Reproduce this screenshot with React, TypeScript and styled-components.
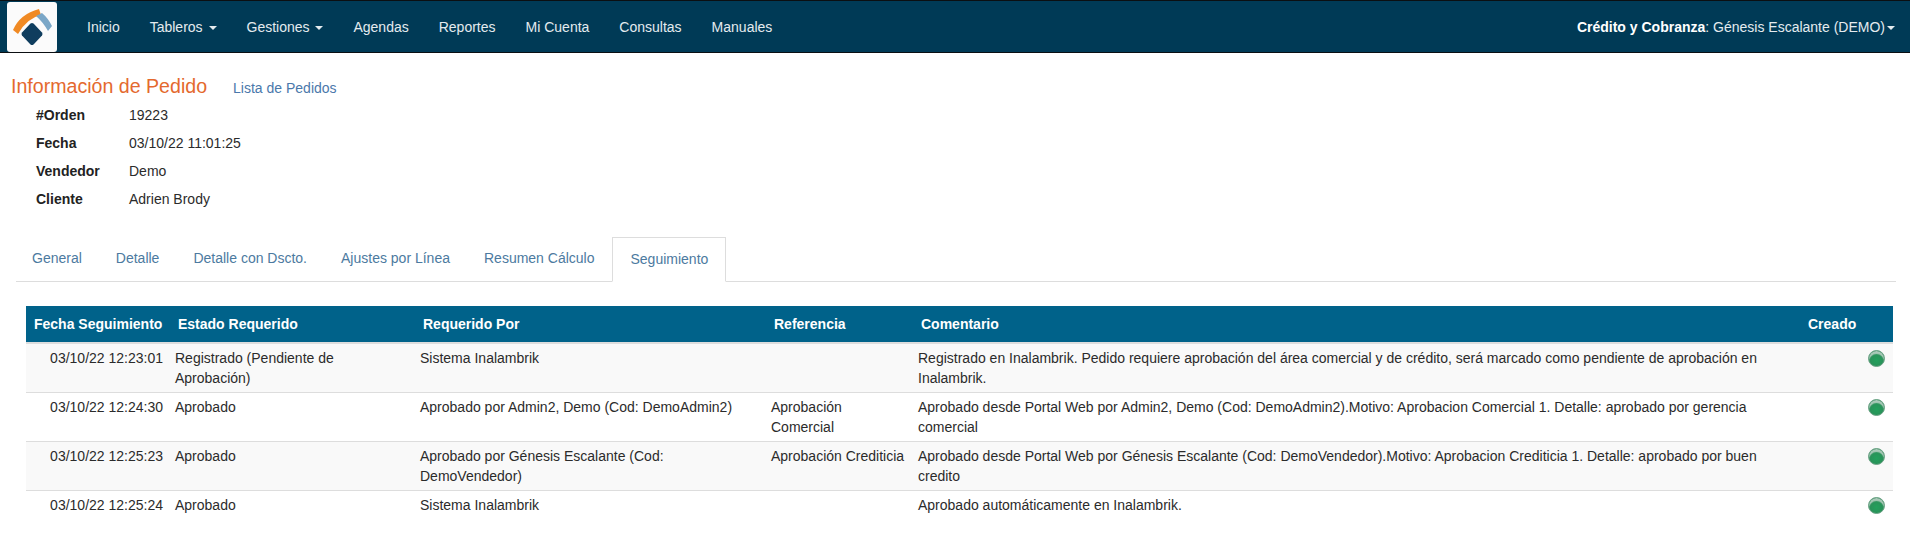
import styled, { createGlobalStyle } from "styled-components";

const GlobalStyle = createGlobalStyle`
  html, body {
    margin: 0;
    padding: 0;
    background: #fff;
  }
  body {
    font-family: "Liberation Sans", Arial, sans-serif;
    font-size: 14px;
    line-height: 20px;
    color: #333;
  }
`;

const Navbar = styled.nav`
  display: flex;
  align-items: center;
  justify-content: space-between;
  height: 51px;
  background-color: #003a56;
  border-top: 1px solid #0b0f12;
  border-bottom: 1px solid #0b0f12;
`;

const NavLeft = styled.div`
  display: flex;
  align-items: center;
  padding-left: 7px;
`;

const LogoBox = styled.div`
  display: flex;
  width: 50px;
  height: 50px;
  margin-right: 15px;
  background: #fbfbfb;
  border-radius: 3px;
`;

const NavItem = styled.a`
  padding: 0 15px;
  color: #e4ebef;
  white-space: nowrap;
`;

const Caret = styled.span`
  display: inline-block;
  width: 0;
  height: 0;
  margin-left: 2px;
  vertical-align: middle;
  border-top: 4px solid currentColor;
  border-right: 4px solid transparent;
  border-left: 4px solid transparent;
`;

const NavRight = styled.div`
  padding-right: 15px;
  color: #e4ebef;
  white-space: nowrap;

  strong {
    color: #fff;
  }
`;

const Header = styled.div`
  display: flex;
  align-items: baseline;
  margin: 23px 0 0 11px;
  height: 25px;
`;

const Title = styled.h1`
  margin: 0;
  font-size: 19.6px;
  line-height: 20px;
  font-weight: 400;
  color: #e4692e;
`;

const ListLink = styled.a`
  margin-left: 26px;
  color: #4a78ab;
`;

const InfoList = styled.dl`
  display: grid;
  grid-template-columns: 93px auto;
  grid-auto-rows: 28px;
  align-items: center;
  justify-content: start;
  margin: 0 0 0 36px;

  dt {
    font-weight: 700;
    color: #222;
  }

  dd {
    margin: 0;
    color: #2b2b2b;
  }
`;

const Tabs = styled.ul`
  display: flex;
  align-items: flex-end;
  gap: 2px;
  height: 44px;
  margin: 24px 14px 0 16px;
  padding: 0;
  list-style: none;
  border-bottom: 1px solid #ddd;
`;

const Tab = styled.li<{ $active?: boolean }>`
  box-sizing: border-box;
  height: ${(p) => (p.$active ? "45px" : "44px")};
  margin-bottom: ${(p) => (p.$active ? "-1px" : "0")};
  padding: ${(p) => (p.$active ? "11px 17px 0" : "11px 16px 0")};
  color: #4c7aa0;
  background: #fff;
  border: ${(p) => (p.$active ? "1px solid #ddd" : "0")};
  border-bottom-color: #fff;
`;

const TableWrap = styled.div`
  margin: 24px 17px 0 26px;
`;

const Table = styled.table`
  width: 100%;
  table-layout: fixed;
  border-collapse: collapse;
`;

const HeadCell = styled.th<{ $first?: boolean }>`
  height: 36px;
  box-sizing: border-box;
  padding: 8px 0 8px ${(p) => (p.$first ? "8px" : "11px")};
  text-align: left;
  font-weight: 700;
  color: #fff;
  background-color: #00628a;
  border-bottom: 2px solid #ddd;
  white-space: nowrap;
`;

const Row = styled.tr<{ $striped: boolean }>`
  background-color: ${(p) => (p.$striped ? "#f9f9f9" : "#fff")};
  border-bottom: 1px solid #ddd;

  &:last-child {
    border-bottom: 0;
  }
`;

const Cell = styled.td<{ $align?: string }>`
  height: 48px;
  box-sizing: border-box;
  padding: 4px 4px 4px 8px;
  vertical-align: top;
  text-align: ${(p) => p.$align || "left"};
  color: #2b2b2b;
`;

const StatusDot = styled.span`
  display: inline-block;
  width: 17px;
  height: 17px;
  margin: 2px 4px 0 0;
  vertical-align: top;
  border-radius: 50%;
  border: 1px solid #6fa488;
  box-sizing: border-box;
  background: radial-gradient(circle at 50% 62%, #23a05c 0%, #2a9159 55%, #2f7a52 100%);
  box-shadow: inset 0 3px 1px #a9c9b8;
`;

const tabs = ["General", "Detalle", "Detalle con Dscto.", "Ajustes por Línea", "Resumen Cálculo", "Seguimiento"];

const columns = [
  { label: "Fecha Seguimiento", width: 141 },
  { label: "Estado Requerido", width: 245 },
  { label: "Requerido Por", width: 351 },
  { label: "Referencia", width: 147 },
  { label: "Comentario", width: 887 },
  { label: "Creado", width: 96 },
];

const rows = [
  {
    date: "03/10/22 12:23:01",
    state: "Registrado (Pendiente de Aprobación)",
    by: "Sistema Inalambrik",
    ref: "",
    comment:
      "Registrado en Inalambrik. Pedido requiere aprobación del área comercial y de crédito, será marcado como pendiente de aprobación en Inalambrik.",
  },
  {
    date: "03/10/22 12:24:30",
    state: "Aprobado",
    by: "Aprobado por Admin2, Demo (Cod: DemoAdmin2)",
    ref: "Aprobación Comercial",
    comment:
      "Aprobado desde Portal Web por Admin2, Demo (Cod: DemoAdmin2).Motivo: Aprobacion Comercial 1. Detalle: aprobado por gerencia comercial",
  },
  {
    date: "03/10/22 12:25:23",
    state: "Aprobado",
    by: "Aprobado por Génesis Escalante (Cod: DemoVendedor)",
    ref: "Aprobación Crediticia",
    comment:
      "Aprobado desde Portal Web por Génesis Escalante (Cod: DemoVendedor).Motivo: Aprobacion Crediticia 1. Detalle: aprobado por buen credito",
  },
  {
    date: "03/10/22 12:25:24",
    state: "Aprobado",
    by: "Sistema Inalambrik",
    ref: "",
    comment: "Aprobado automáticamente en Inalambrik.",
  },
];

const Logo = () => (
  <svg width="50" height="50" viewBox="0 0 50 50">
    <path d="M6 28 Q13 12 32 7 L34 13 Q20 16 11 32 Z" fill="#f08a24" />
    <path d="M29 14 L35 11 Q41 16 45 24 L41 29 Q36 20 29 14 Z" fill="#7ba7c7" />
    <path
      d="M23.5 21.6 Q25 20.6 26.5 21.6 L35 30.5 Q36 32 35 33.5 L26.5 42.4 Q25 43.4 23.5 42.4 L15 33.5 Q14 32 15 30.5 Z"
      fill="#0f3d5e"
    />
  </svg>
);

const App = () => {
  return (
    <>
      <GlobalStyle />
      <Navbar>
        <NavLeft>
          <LogoBox>
            <Logo />
          </LogoBox>
          <NavItem>Inicio</NavItem>
          <NavItem>
            Tableros <Caret />
          </NavItem>
          <NavItem>
            Gestiones <Caret />
          </NavItem>
          <NavItem>Agendas</NavItem>
          <NavItem>Reportes</NavItem>
          <NavItem>Mi Cuenta</NavItem>
          <NavItem>Consultas</NavItem>
          <NavItem>Manuales</NavItem>
        </NavLeft>
        <NavRight>
          <strong>Crédito y Cobranza</strong>: Génesis Escalante (DEMO)
          <Caret />
        </NavRight>
      </Navbar>
      <Header>
        <Title>Información de Pedido</Title>
        <ListLink>Lista de Pedidos</ListLink>
      </Header>
      <InfoList>
        <dt>#Orden</dt>
        <dd>19223</dd>
        <dt>Fecha</dt>
        <dd>03/10/22 11:01:25</dd>
        <dt>Vendedor</dt>
        <dd>Demo</dd>
        <dt>Cliente</dt>
        <dd>Adrien Brody</dd>
      </InfoList>
      <Tabs>
        {tabs.map((t) => (
          <Tab key={t} $active={t === "Seguimiento"}>
            {t}
          </Tab>
        ))}
      </Tabs>
      <TableWrap>
        <Table>
          <colgroup>
            {columns.map((c) => (
              <col key={c.label} width={c.width} />
            ))}
          </colgroup>
          <thead>
            <tr>
              {columns.map((c, i) => (
                <HeadCell key={c.label} $first={i === 0}>
                  {c.label}
                </HeadCell>
              ))}
            </tr>
          </thead>
          <tbody>
            {rows.map((r, i) => (
              <Row key={r.date} $striped={i % 2 === 0}>
                <Cell $align="right">{r.date}</Cell>
                <Cell>{r.state}</Cell>
                <Cell>{r.by}</Cell>
                <Cell>{r.ref}</Cell>
                <Cell>{r.comment}</Cell>
                <Cell $align="right">
                  <StatusDot />
                </Cell>
              </Row>
            ))}
          </tbody>
        </Table>
      </TableWrap>
    </>
  );
};

export default App;
